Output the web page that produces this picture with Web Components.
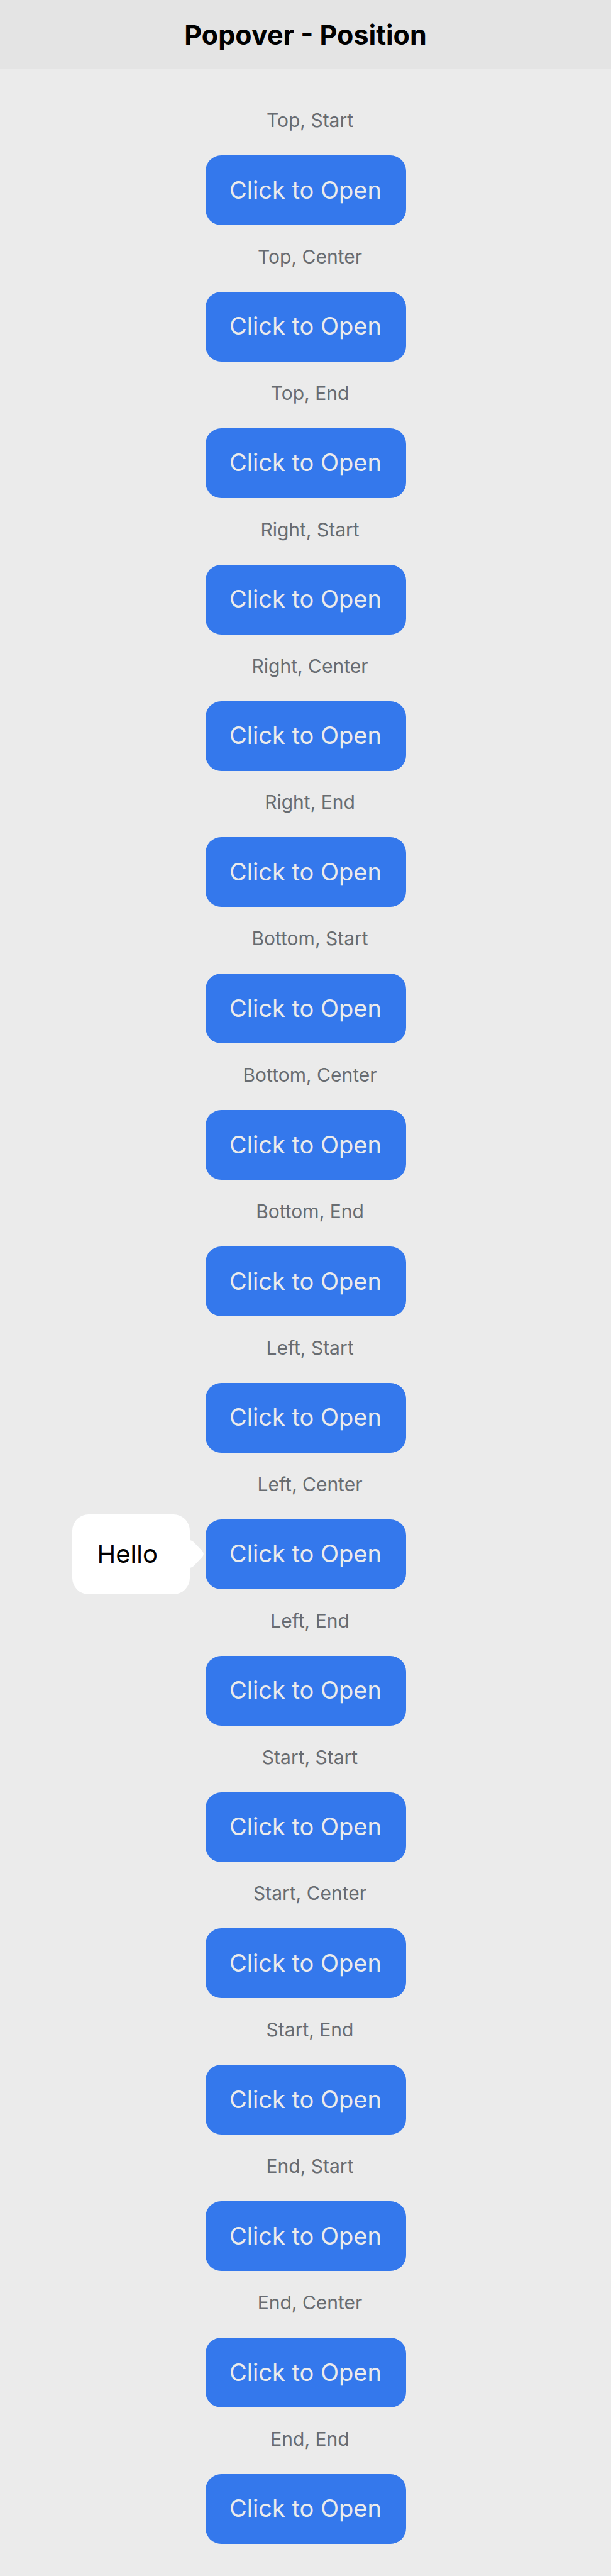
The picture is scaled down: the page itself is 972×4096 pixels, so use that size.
<!DOCTYPE html>
<html lang="en">
<head>
<meta charset="utf-8">
<meta name="viewport" content="width=device-width, initial-scale=1">
<title>Popover - Position</title>
<style>
  body { margin: 0; background: #ebebeb; font-family: Inter, "Liberation Sans", sans-serif; }
</style>
</head>
<body>
<popover-page></popover-page>

<script>
class PageHeader extends HTMLElement {
  constructor() {
    super();
    this.attachShadow({ mode: "open" }).innerHTML = `
      <style>
        :host { display: block; }
        header { display: flex; align-items: center; justify-content: center; height: 109px;
                 background: #e4e4e4; border-bottom: 1px solid #b6b6b6; }
        h1 { margin: 0; font-size: 43px; line-height: 48px; font-weight: 700; color: #000; }
      </style>
      <header><h1><slot></slot></h1></header>`;
  }
}

class PopoverBubble extends HTMLElement {
  constructor() {
    super();
    this.attachShadow({ mode: "open" }).innerHTML = `
      <style>
        /* Sits to the left of its trigger, vertically centred on it */
        :host { position: absolute; right: 100%; top: -8px; bottom: -8px; padding-right: 25px; box-sizing: border-box; }
        .content { display: flex; align-items: center; box-sizing: border-box; width: 187px; height: 100%;
                   padding: 0 40px; border-radius: 26px; background: #fff; color: #000;
                   font-size: 40px; line-height: 48px; }
        svg { position: absolute; right: 3px; top: 50%; margin-top: -22px; width: 22px; height: 44px; fill: #fff; }
      </style>
      <div class="content" role="dialog"><slot></slot></div>
      <svg viewBox="0 0 22 44" aria-hidden="true"><path d="M0 0C3 .5 5 2 7 4L20 17.500Q23.500 22 20 26.500L7 40C5 42 3 43.500 0 44Z"/></svg>`;
  }
}

class PopoverTrigger extends HTMLElement {
  constructor() {
    super();
    this.attachShadow({ mode: "open" }).innerHTML = `
      <style>
        :host { display: flex; flex-direction: column; align-items: center; }
        h2 { margin: 0 0 38px; padding-left: 14px; font-size: 30px; line-height: 36px; font-weight: 400; color: #686c71; }
        .anchor { position: relative; }
        button { display: block; min-width: 319px; height: 111px; padding: 0 38px 2px; border: 0; border-radius: 25px;
                 background: #3478ec; color: #ebebeb; font-family: inherit; font-size: 38px; line-height: 48px; font-weight: 400; cursor: pointer; }
      </style>
      <h2 id="label"><slot></slot></h2>
      <div class="anchor">
        <button type="button" aria-describedby="label">Click to Open</button>
        <slot name="popover"></slot>
      </div>`;
  }
}

class PopoverPage extends HTMLElement {
  constructor() {
    super();
    const sides = ["Top", "Right", "Bottom", "Left", "Start", "End"];
    const alignments = ["Start", "Center", "End"];
    const triggers = sides.flatMap(side => alignments.map(align => {
      const open = side === "Left" && align === "Center";
      return `<popover-trigger>${side}, ${align}${open ? '<popover-bubble slot="popover">Hello</popover-bubble>' : ""}</popover-trigger>`;
    })).join("");
    this.attachShadow({ mode: "open" }).innerHTML = `
      <style>
        :host { display: flex; flex-direction: column; min-height: 100vh; }
        main { flex: 1; display: flex; flex-direction: column; justify-content: space-between; gap: 24px; padding: 63px 0 51px; }
      </style>
      <page-header>Popover - Position</page-header>
      <main>${triggers}</main>`;
  }
}

customElements.define("page-header", PageHeader);
customElements.define("popover-bubble", PopoverBubble);
customElements.define("popover-trigger", PopoverTrigger);
customElements.define("popover-page", PopoverPage);
</script>
</body>
</html>
